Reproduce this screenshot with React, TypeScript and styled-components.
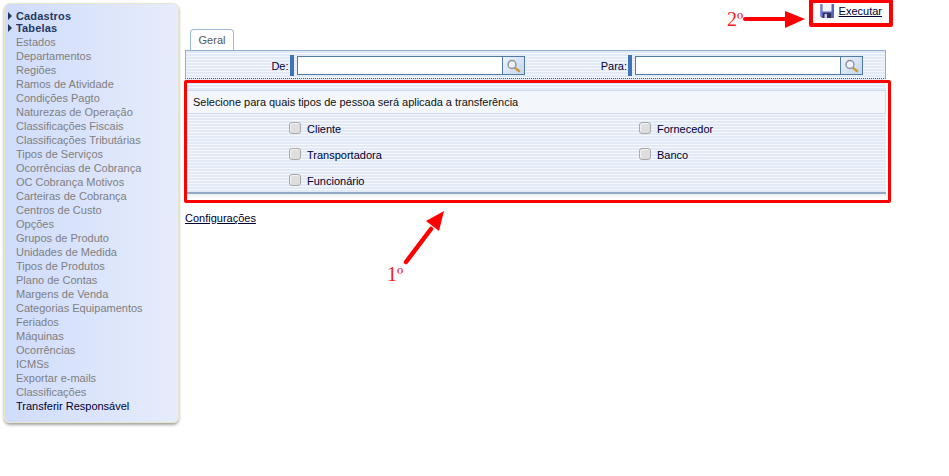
import { createGlobalStyle } from "styled-components";
import styled from "styled-components";
import { Fragment } from "react";

const GlobalStyle = createGlobalStyle`
  html, body {
    margin: 0;
    padding: 0;
    background: #fff;
    font-family: "Liberation Sans", Arial, sans-serif;
    font-size: 11px;
    color: #000033;
  }
`;

const Page = styled.div`
  position: relative;
  display: flex;
  align-items: flex-start;
  width: 949px;
  height: 476px;
  overflow: hidden;
`;

const Sidebar = styled.nav`
  box-sizing: border-box;
  flex: none;
  width: 175px;
  height: 420px;
  margin: 3px 0 0 4px;
  padding: 6px 0 0 3px;
  border: 1px solid #e6e6cf;
  border-radius: 6px;
  background: linear-gradient(90deg, #cfdcfb 0%, #e6ecfb 100%);
  box-shadow: 0 2px 3px rgba(90, 90, 80, 0.55);
`;

const Group = styled.div`
  display: flex;
  align-items: center;
  height: 12px;
  font-weight: bold;
  color: #1f3a63;
  font-size: 11px;
  letter-spacing: 0.15px;
`;

const Caret = styled.span`
  width: 0;
  height: 0;
  margin-right: 4px;
  border-style: solid;
  border-width: 4px 0 4px 4px;
  border-color: transparent transparent transparent #1f3a63;
`;

const MenuList = styled.ul`
  list-style: none;
  margin: 1px 0 0;
  padding: 0 0 0 8px;
`;

const MenuItem = styled.li<{ $active?: boolean }>`
  height: 14px;
  line-height: 14px;
  white-space: nowrap;
  color: ${(p) => (p.$active ? "#000033" : "#7f7f7f")};
`;

const Main = styled.main`
  flex: none;
  width: 701px;
  margin-left: 6px;
`;

const TopBar = styled.div`
  display: flex;
  justify-content: flex-end;
  height: 29px;
`;

const RunLink = styled.a`
  display: flex;
  align-items: center;
  gap: 5px;
  height: 14px;
  margin: 4px 4px 0 0;
  color: #000033;
  text-decoration: underline;
`;

const TabRow = styled.div`
  display: flex;
  padding-left: 5px;
`;

const Tab = styled.div`
  box-sizing: border-box;
  width: 44px;
  height: 21px;
  line-height: 20px;
  text-align: center;
  color: #555;
  font-size: 11px;
  background: #fff;
  border: 1px solid #9db8d6;
  border-bottom: 0;
  border-radius: 4px 4px 0 0;
`;

const stripes = `repeating-linear-gradient(180deg, #e2e9f7 0, #e2e9f7 2px, #f4f7fc 2px, #f4f7fc 3px)`;

const FilterBar = styled.div`
  box-sizing: border-box;
  display: flex;
  justify-content: flex-end;
  height: 29px;
  padding: 4px 22px 0 0;
  background: ${stripes};
  border: 1px solid #8fb0d3;
  border-bottom: 1px dotted #4a5a70;
`;

const FilterField = styled.label`
  display: flex;
  align-items: center;
  height: 21px;
  width: 350px;
  justify-content: flex-end;
`;

const FieldLabel = styled.span`
  margin-right: 1px;
  font-size: 11px;
  color: #000033;
`;

const RequiredMark = styled.span`
  width: 4px;
  height: 21px;
  margin-right: 3px;
  background: #3f74b8;
`;

const TextInput = styled.div`
  box-sizing: border-box;
  width: 206px;
  height: 19px;
  background: #fff;
  border: 1px solid #4f7ba6;
`;

const SearchButton = styled.div`
  box-sizing: border-box;
  display: flex;
  align-items: center;
  justify-content: center;
  width: 23px;
  height: 19px;
  margin-left: -1px;
  background: linear-gradient(135deg, #eef3fb, #c4d6ef);
  border: 1px solid #4f7ba6;
`;

const Section = styled.section`
  box-sizing: border-box;
  height: 115px;
  padding-top: 11px;
  background: ${stripes};
  border-bottom: 2px solid #93a9c2;
`;

const SectionHeader = styled.div`
  box-sizing: border-box;
  height: 24px;
  line-height: 22px;
  padding-left: 7px;
  background: #f3f6fb;
  border: 1px solid #cddcec;
  color: #111;
  font-size: 11px;
  letter-spacing: -0.03px;
`;

const SectionFade = styled.div`
  height: 5px;
  background: linear-gradient(180deg, #efefef, #fff);
`;

const CheckGrid = styled.div`
  display: grid;
  grid-template-columns: 350px 1fr;
  grid-auto-rows: 26px;
  padding: 2px 0 0 104px;
`;

const CheckItem = styled.label`
  display: flex;
  align-items: center;
  gap: 6px;
  height: 26px;
`;

const CheckBox = styled.span`
  box-sizing: border-box;
  width: 12px;
  height: 12px;
  margin-top: -3px;
  background: #dedede;
  border: 1px solid #a9a9a9;
  border-radius: 3px;
  box-shadow: inset 1px 1px 1px #f4f4f4;
`;

const ConfigLink = styled.a`
  display: inline-block;
  margin-top: 13px;
  color: #000033;
  text-decoration: underline;
  font-size: 11px;
`;

const HighlightBox = styled.div<{ $x: number; $y: number; $w: number; $h: number; $border: number }>`
  position: absolute;
  box-sizing: border-box;
  left: ${(p) => p.$x}px;
  top: ${(p) => p.$y}px;
  width: ${(p) => p.$w}px;
  height: ${(p) => p.$h}px;
  border: ${(p) => p.$border}px solid #ff0000;
  border-radius: 2px;
`;

const Annotation = styled.span<{ $x: number; $y: number }>`
  position: absolute;
  left: ${(p) => p.$x}px;
  top: ${(p) => p.$y}px;
  font-family: "Liberation Serif", "Times New Roman", serif;
  font-size: 20px;
  line-height: 22px;
  color: #f01c1c;
`;

const ArrowLayer = styled.svg`
  position: absolute;
  left: 0;
  top: 0;
  width: 949px;
  height: 476px;
  pointer-events: none;
`;

const menuItems = [
  "Estados",
  "Departamentos",
  "Regiões",
  "Ramos de Atividade",
  "Condições Pagto",
  "Naturezas de Operação",
  "Classificações Fiscais",
  "Classificações Tributárias",
  "Tipos de Serviços",
  "Ocorrências de Cobrança",
  "OC Cobrança Motivos",
  "Carteiras de Cobrança",
  "Centros de Custo",
  "Opções",
  "Grupos de Produto",
  "Unidades de Medida",
  "Tipos de Produtos",
  "Plano de Contas",
  "Margens de Venda",
  "Categorias Equipamentos",
  "Feriados",
  "Máquinas",
  "Ocorrências",
  "ICMSs",
  "Exportar e-mails",
  "Classificações",
];

const personTypes = ["Cliente", "Fornecedor", "Transportadora", "Banco", "Funcionário"];

function FloppyIcon() {
  return (
    <svg width="14" height="14" viewBox="0 0 14 14">
      <path d="M0 0H14V14H2L0 12Z" fill="#5a62bb" />
      <rect x="0" y="0" width="1.5" height="12" fill="#8a92dc" />
      <rect x="2.5" y="0" width="9" height="7.5" fill="#f0f2fb" />
      <rect x="3" y="9" width="8" height="5" fill="#2d3358" />
      <rect x="4.5" y="10" width="2.5" height="4" fill="#c9cddf" />
    </svg>
  );
}

function LoupeIcon() {
  return (
    <svg width="15" height="14" viewBox="0 0 15 14">
      <path d="M8.5 8.5 L13 12" stroke="#d39a3c" strokeWidth="2.6" strokeLinecap="round" />
      <circle cx="6" cy="5.5" r="4" fill="#eef2f7" stroke="#8b949c" strokeWidth="1.4" />
      <path d="M3.8 5 A2.4 2.4 0 0 1 6 3.2" stroke="#fff" strokeWidth="1" fill="none" />
    </svg>
  );
}

function Filter({ label }: { label: string }) {
  return (
    <FilterField>
      <FieldLabel>{label}</FieldLabel>
      <RequiredMark />
      <TextInput />
      <SearchButton>
        <LoupeIcon />
      </SearchButton>
    </FilterField>
  );
}

export default function App() {
  return (
    <Fragment>
      <GlobalStyle />
      <Page>
        <Sidebar>
          <Group>
            <Caret />
            Cadastros
          </Group>
          <Group>
            <Caret />
            Tabelas
          </Group>
          <MenuList>
            {menuItems.map((item) => (
              <MenuItem key={item}>{item}</MenuItem>
            ))}
            <MenuItem $active>Transferir Responsável</MenuItem>
          </MenuList>
        </Sidebar>
        <Main>
          <TopBar>
            <RunLink>
              <FloppyIcon />
              Executar
            </RunLink>
          </TopBar>
          <TabRow>
            <Tab>Geral</Tab>
          </TabRow>
          <FilterBar>
            <Filter label="De:" />
            <Filter label="Para:" />
          </FilterBar>
          <Section>
            <SectionHeader>Selecione para quais tipos de pessoa será aplicada a transferência</SectionHeader>
            <CheckGrid>
              {personTypes.map((type) => (
                <CheckItem key={type}>
                  <CheckBox />
                  {type}
                </CheckItem>
              ))}
            </CheckGrid>
          </Section>
          <SectionFade />
          <ConfigLink>Configurações</ConfigLink>
        </Main>

        <HighlightBox $x={184} $y={80} $w={707} $h={123} $border={3} />
        <HighlightBox $x={809} $y={-1} $w={84} $h={28} $border={4} />
        <Annotation $x={727} $y={8}>2º</Annotation>
        <Annotation $x={387} $y={263}>1º</Annotation>
        <ArrowLayer viewBox="0 0 949 476">
          <path d="M745 19 H786" stroke="#ff0000" strokeWidth="4" strokeLinecap="round" />
          <polygon points="785,11 805,19 785,28" fill="#ff0000" />
          <path d="M406 262 L431 229" stroke="#ff0000" strokeWidth="4.5" strokeLinecap="round" />
          <polygon points="444,211 439,231 426,221" fill="#ff0000" />
        </ArrowLayer>
      </Page>
    </Fragment>
  );
}
